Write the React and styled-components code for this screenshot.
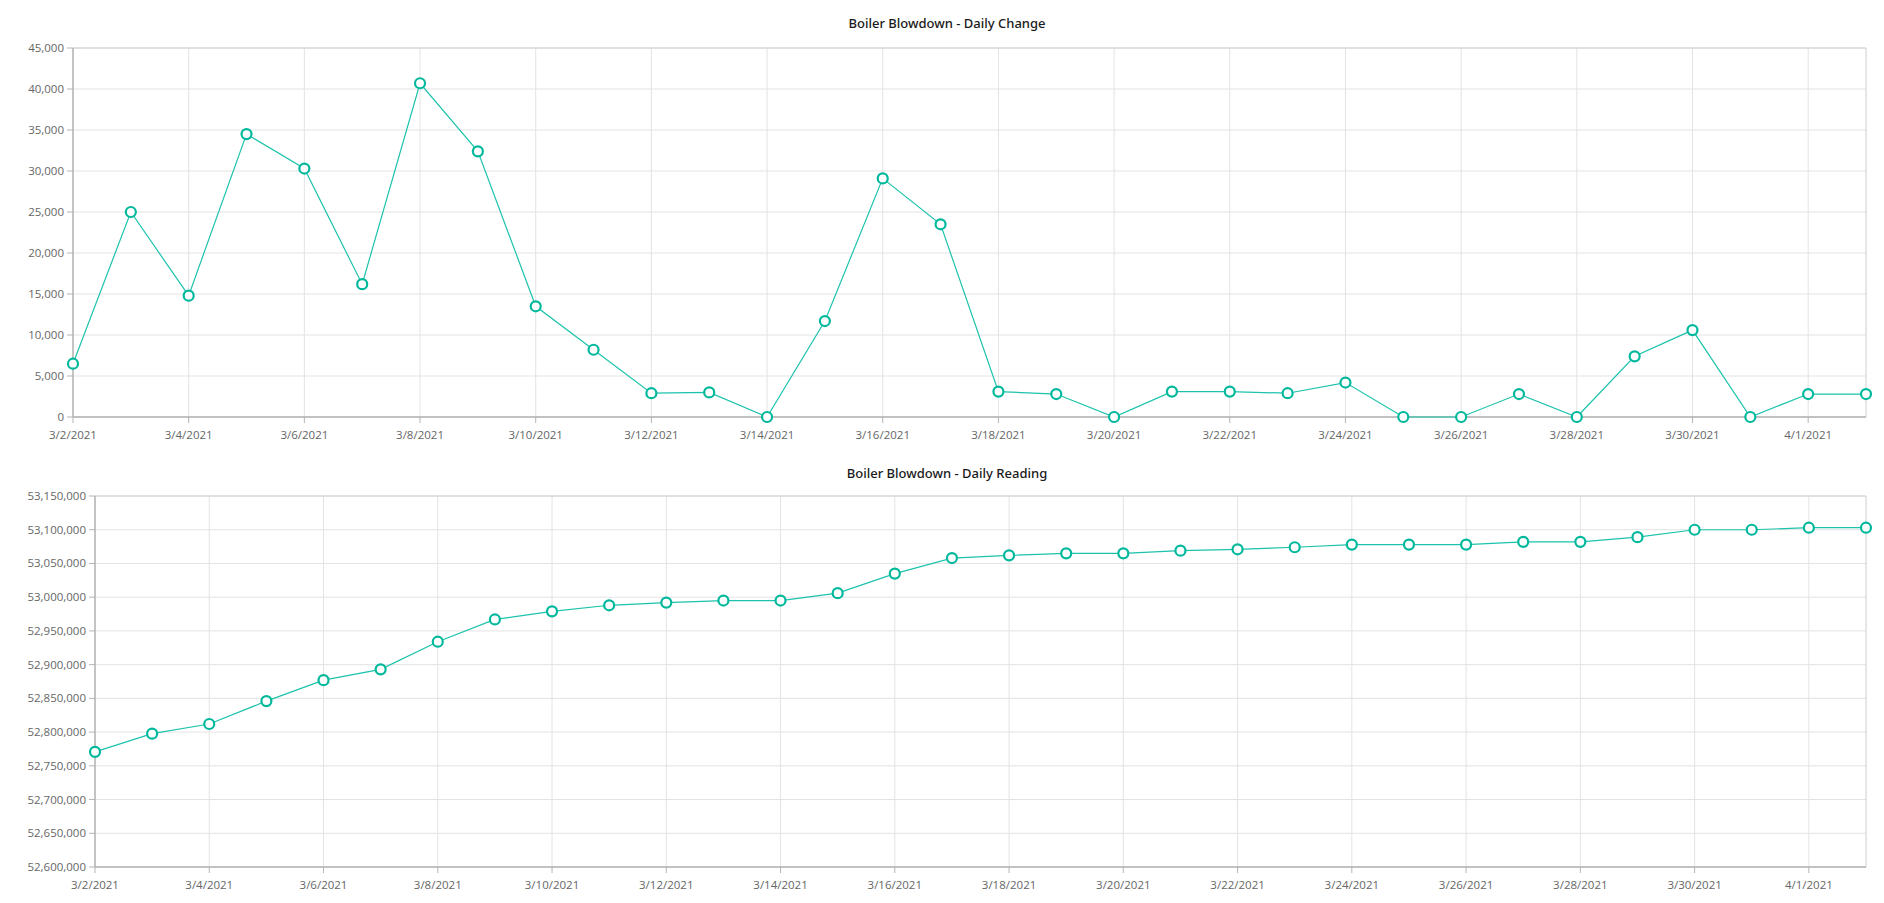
import React from "react";
import styled, { createGlobalStyle } from "styled-components";

const Global = createGlobalStyle`
  body { margin: 0; background: #fff; font-family: "Open Sans", "Noto Sans", sans-serif; }
`;

const Page = styled.div`
  display: flex;
  flex-direction: column;
  width: 1884px;
`;

const Panel = styled.svg`
  display: block;
  width: 1884px;
  height: ${(p) => p.$h}px;
`;

const Title = styled.text`
  font-family: "Noto Sans", "Open Sans", sans-serif;
  font-size: 13px;
  font-weight: 500;
  fill: #1a1a1a;
`;

const Label = styled.text`
  font-family: "Open Sans", "Noto Sans", sans-serif;
  font-size: 11.5px;
  fill: #666;
`;

const dates = [];
for (let d = 2; d <= 31; d++) dates.push(`3/${d}/2021`);
dates.push("4/1/2021", "4/2/2021");

const change = [6500, 25000, 14800, 34500, 30300, 16200, 40700, 32400, 13500, 8200, 2900, 3000, 0, 11700, 29100, 23500, 3100, 2800, 0, 3100, 3100, 2900, 4200, 0, 0, 2800, 0, 7400, 10600, 0, 2800, 2800];
const reading = [170700, 197700, 212000, 246000, 277000, 293000, 334000, 367000, 379000, 388000, 392000, 395000, 395000, 406000, 435000, 458000, 462000, 465000, 465000, 469000, 471000, 474000, 478000, 478000, 478000, 482000, 482000, 489000, 500000, 500000, 503000, 503000].map((v) => 52600000 + v);

function Chart({ h, title, titleY, left, top, bottom, right, min, max, step, data }) {
  const n = data.length;
  const xs = (i) => left + ((right - left) * i) / (n - 1);
  const ys = (v) => bottom - ((bottom - top) * (v - min)) / (max - min);
  const ticks = [];
  for (let v = min; v <= max + 1; v += step) ticks.push(v);
  const pts = data.map((v, i) => `${xs(i)},${ys(v)}`).join(" ");
  return (
    <Panel $h={h} viewBox={`0 0 1884 ${h}`}>
      <Title x={947} y={titleY} textAnchor="middle">{title}</Title>
      {ticks.map((v) => (
        <g key={v}>
          <line x1={left} x2={right} y1={ys(v)} y2={ys(v)} stroke="#e3e3e3" />
          <line x1={left - 6} x2={left} y1={ys(v)} y2={ys(v)} stroke="#b5b5b5" />
          <Label x={left - 9} y={ys(v) + 4} textAnchor="end">{v.toLocaleString("en-US")}</Label>
        </g>
      ))}
      {data.map((_, i) =>
        i % 2 === 0 ? (
          <g key={i}>
            {i > 0 && <line x1={xs(i)} x2={xs(i)} y1={top} y2={bottom} stroke="#e3e3e3" />}
            <line x1={xs(i)} x2={xs(i)} y1={bottom} y2={bottom + 6} stroke="#b5b5b5" />
            <Label x={xs(i)} y={bottom + 22} textAnchor="middle">{dates[i]}</Label>
          </g>
        ) : null
      )}
      <line x1={left} x2={right} y1={top} y2={top} stroke="#cfcfcf" />
      <line x1={right} x2={right} y1={top} y2={bottom} stroke="#cfcfcf" />
      <line x1={left} x2={left} y1={top} y2={bottom} stroke="#b0b0b0" strokeWidth="1.5" />
      <line x1={left} x2={right} y1={bottom} y2={bottom} stroke="#b0b0b0" strokeWidth="1.5" />
      <polyline points={pts} fill="none" stroke="#1cc3ac" strokeWidth="1.2" />
      {data.map((v, i) => (
        <circle key={i} cx={xs(i)} cy={ys(v)} r="5" fill="#fff" stroke="#00b89c" strokeWidth="2.2" />
      ))}
    </Panel>
  );
}

export default function App() {
  return (
    <Page>
      <Global />
      <Chart h={455} title="Boiler Blowdown - Daily Change" titleY={28} left={73} top={48} bottom={417} right={1866} min={0} max={45000} step={5000} data={change} />
      <Chart h={448} title="Boiler Blowdown - Daily Reading" titleY={23} left={95} top={41} bottom={412} right={1866} min={52600000} max={53150000} step={50000} data={reading} />
    </Page>
  );
}
